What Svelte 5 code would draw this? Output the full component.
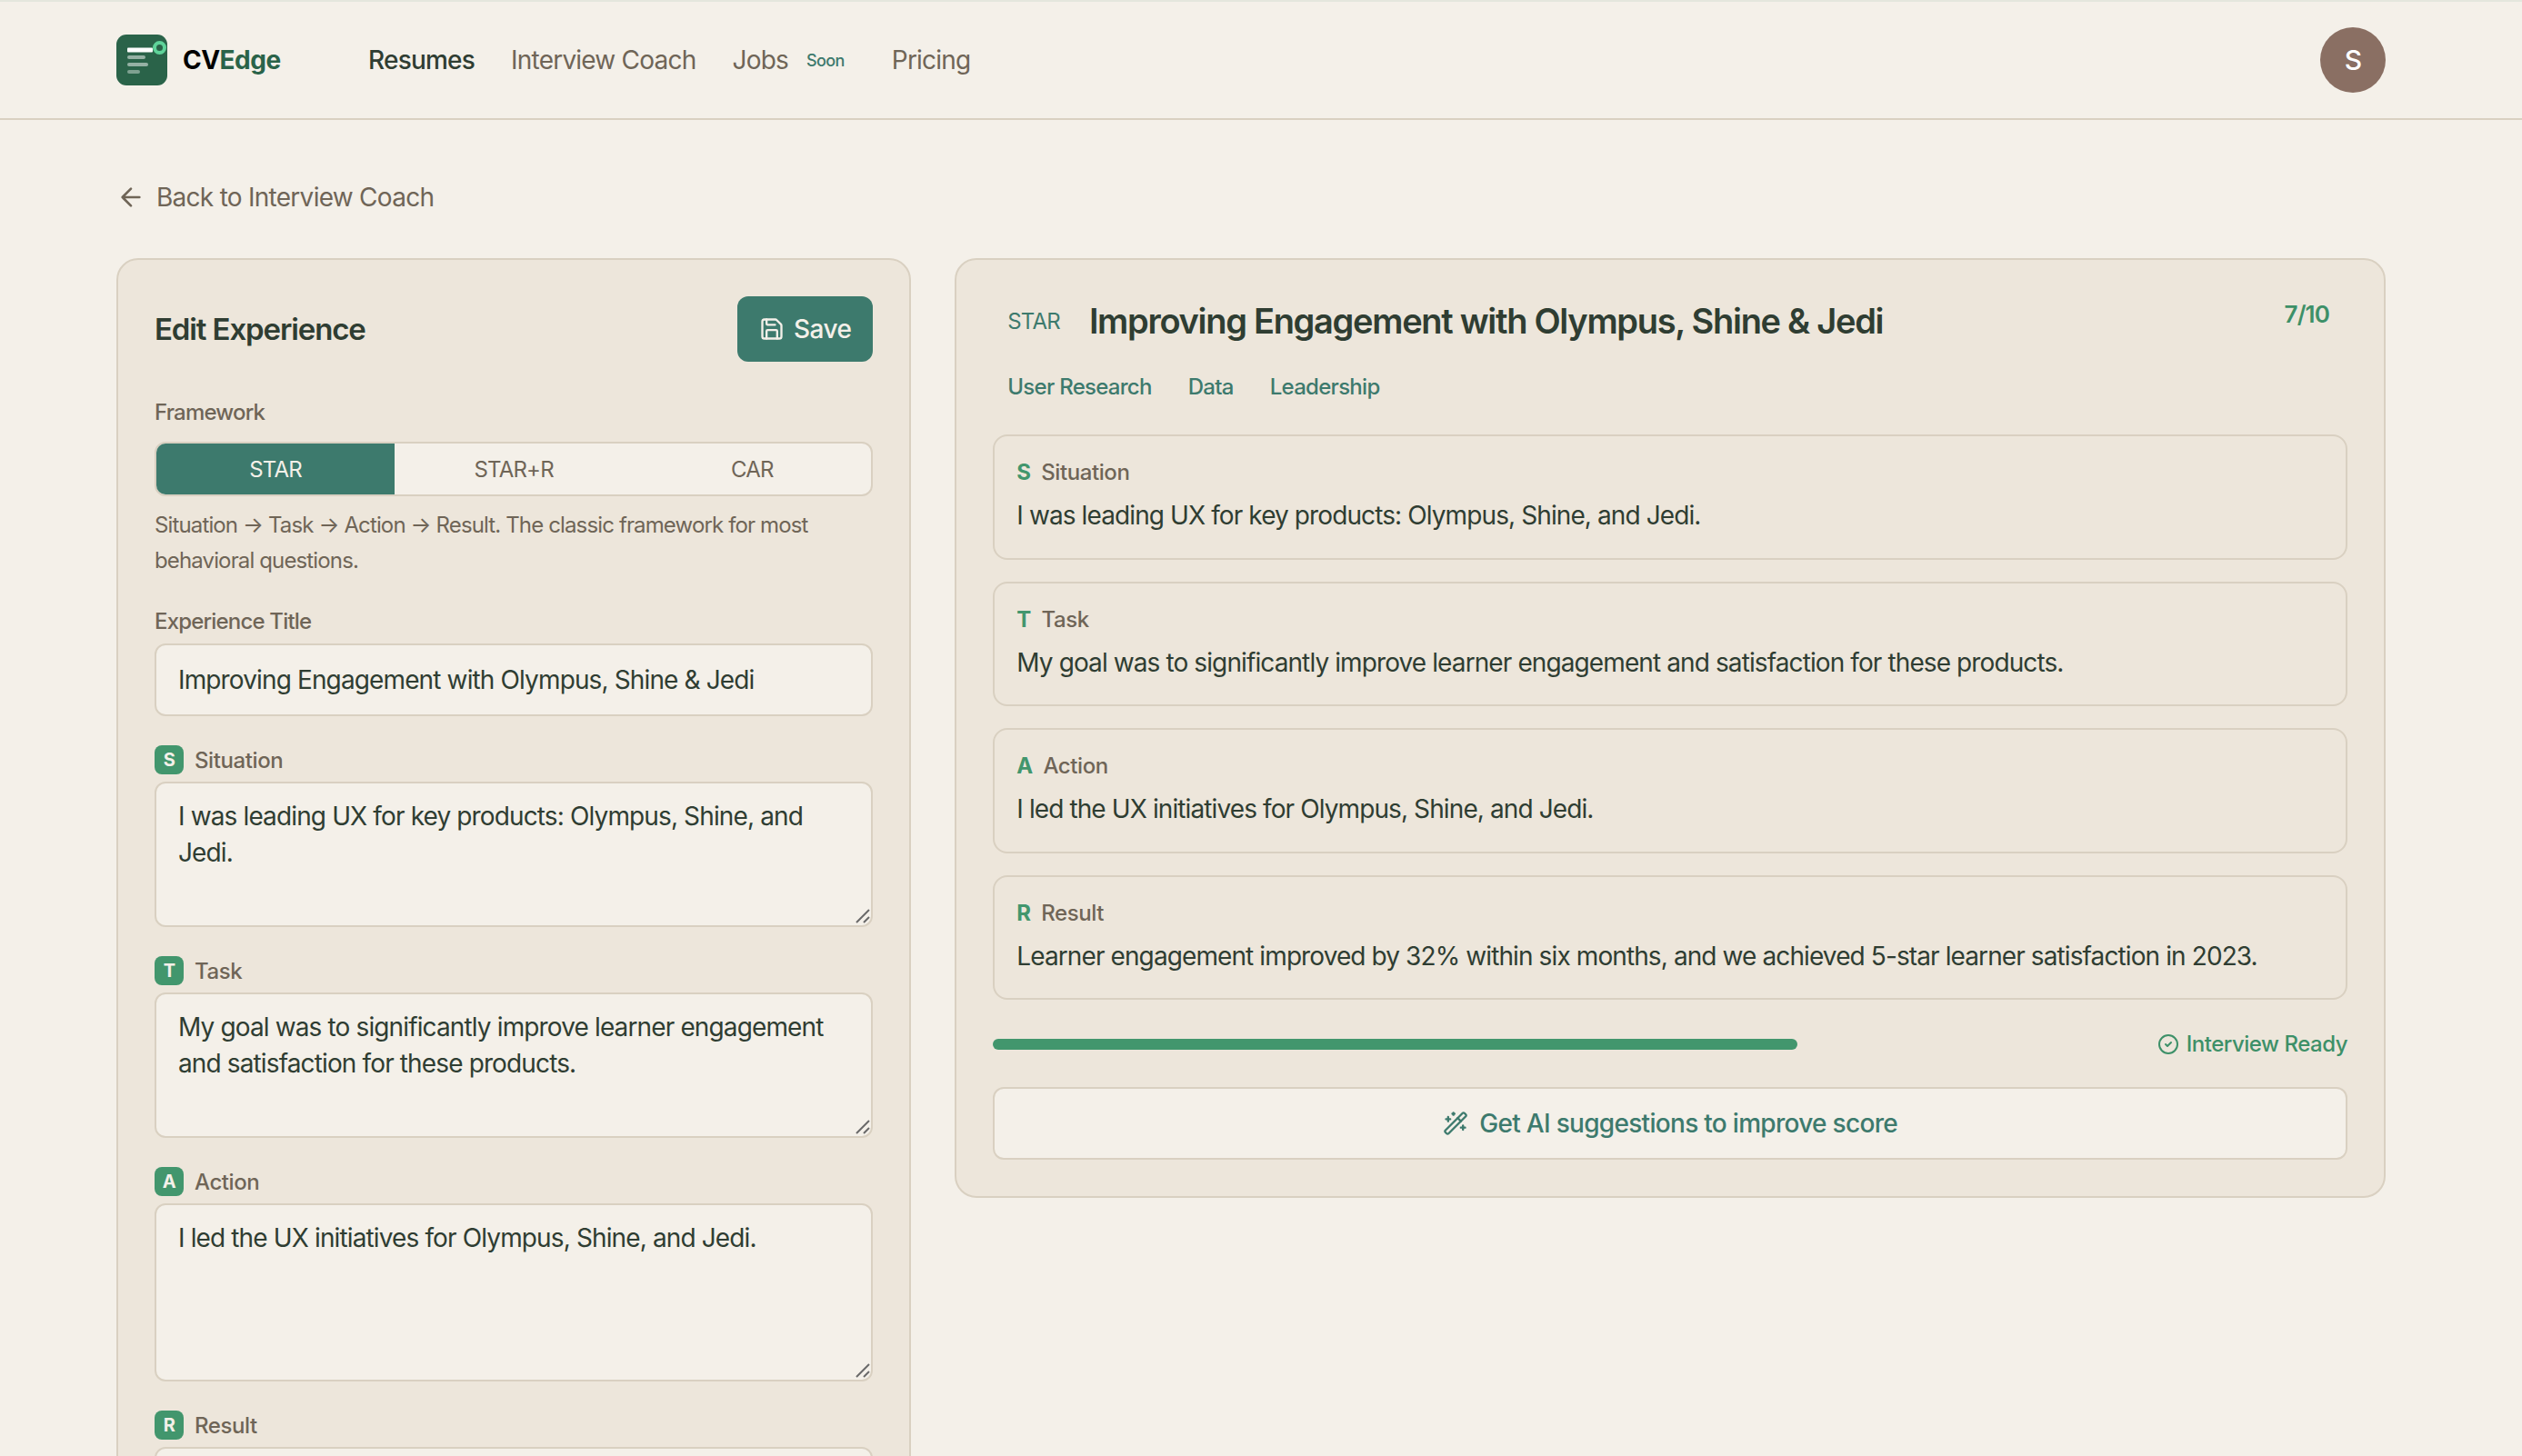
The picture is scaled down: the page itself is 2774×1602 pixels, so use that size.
<script lang="ts">
	const sections = [
		{ key: 'S', label: 'Situation', text: 'I was leading UX for key products: Olympus, Shine, and Jedi.', rows: 'short' },
		{ key: 'T', label: 'Task', text: 'My goal was to significantly improve learner engagement and satisfaction for these products.', rows: 'short' },
		{ key: 'A', label: 'Action', text: 'I led the UX initiatives for Olympus, Shine, and Jedi.', rows: 'tall' },
		{ key: 'R', label: 'Result', text: 'Learner engagement improved by 32% within six months, and we achieved 5-star learner satisfaction in 2023.', rows: 'tall' }
	];

	const frameworks = ['STAR', 'STAR+R', 'CAR'];
	const tags = ['User Research', 'Data', 'Leadership'];
</script>

<div class="page">
	<header class="topbar">
		<div class="brand">
			<svg class="logo" viewBox="0 0 56 56">
				<rect width="56" height="56" rx="11" fill="#2a6349" />
				<rect x="12" y="14.500" width="28" height="5" rx="1" fill="#fff" />
				<rect x="12" y="23" width="20" height="4" rx="2" fill="#fff" opacity="0.5" />
				<rect x="12" y="31" width="23" height="4" rx="2" fill="#fff" opacity="0.5" />
				<rect x="12" y="39" width="14" height="4" rx="2" fill="#fff" opacity="0.4" />
				<circle cx="47.500" cy="14.500" r="5.500" fill="none" stroke="#5fd39a" stroke-width="4" />
			</svg>
			<span class="wordmark">CV<span>Edge</span></span>
		</div>
		<nav>
			<a class="active" href="#resumes">Resumes</a>
			<a href="#coach">Interview Coach</a>
			<a href="#jobs">Jobs<small>Soon</small></a>
			<a href="#pricing">Pricing</a>
		</nav>
		<div class="avatar">S</div>
	</header>

	<main>
		<a class="back" href="#coach">
			<svg viewBox="0 0 24 24"><path d="m12 19-7-7 7-7M19 12H5" /></svg>
			Back to Interview Coach
		</a>

		<div class="columns">
			<section class="card editor">
				<div class="editor-head">
					<h2>Edit Experience</h2>
					<button class="save">
						<svg viewBox="0 0 24 24"><path d="M15.200 3a2 2 0 0 1 1.400.6l3.800 3.800a2 2 0 0 1 .6 1.400V19a2 2 0 0 1-2 2H5a2 2 0 0 1-2-2V5a2 2 0 0 1 2-2z" /><path d="M17 21v-7a1 1 0 0 0-1-1H8a1 1 0 0 0-1 1v7M7 3v4a1 1 0 0 0 1 1h7" /></svg>
						Save
					</button>
				</div>

				<div class="label">Framework</div>
				<div class="segments">
					{#each frameworks as name, i}
						<button class:on={i === 0}>{name}</button>
					{/each}
				</div>
				<p class="hint">Situation → Task → Action → Result. The classic framework for most behavioral questions.</p>

				<label class="label title-label" for="title">Experience Title</label>
				<input id="title" value="Improving Engagement with Olympus, Shine &amp; Jedi" />

				{#each sections as s}
					<div class="field-head">
						<span class="badge">{s.key}</span>
						<span>{s.label}</span>
					</div>
					<div class="area">
						<textarea class={s.rows} value={s.key === 'R' ? '' : s.text}></textarea>
						<svg class="grip" viewBox="0 0 16 16"><path d="M1 15 15 1M9 15l6-6" /></svg>
					</div>
				{/each}
			</section>

			<section class="card preview">
				<div class="title-row">
					<span class="fw">STAR</span>
					<h1>Improving Engagement with Olympus, Shine &amp; Jedi</h1>
					<span class="score">7/10</span>
				</div>
				<div class="tags">
					{#each tags as tag}
						<span>{tag}</span>
					{/each}
				</div>

				<div class="blocks">
					{#each sections as s}
						<div class="block">
							<div class="block-head"><b>{s.key}</b><span>{s.label}</span></div>
							<p>{s.text}</p>
						</div>
					{/each}
				</div>

				<div class="progress">
					<div class="track"><div class="fill" style="width: {7 * 10}%"></div></div>
					<span class="ready">
						<svg viewBox="0 0 24 24"><circle cx="12" cy="12" r="10" /><path d="m9 12 2 2 4-4" /></svg>
						Interview Ready
					</span>
				</div>

				<button class="suggest">
					<svg viewBox="0 0 24 24"><path d="m21.640 3.640-1.280-1.280a1.210 1.210 0 0 0-1.720 0L2.360 18.640a1.210 1.210 0 0 0 0 1.720l1.280 1.280a1.200 1.200 0 0 0 1.720 0L21.640 5.360a1.200 1.200 0 0 0 0-1.720" /><path d="m14 7 3 3M5 6v4M19 14v4M10 2v2M7 8H3M21 16h-4M11 3H9" /></svg>
					Get AI suggestions to improve score
				</button>
			</section>
		</div>
	</main>
</div>

<style>
	:global(body) {
		margin: 0;
		background: #f4f0e9;
	}

	.page {
		height: 1602px;
		overflow: hidden;
		box-sizing: border-box;
		border-top: 2px solid #e4e6dd;
		background: #f4f0e9;
		color: #2f3d32;
		font-family: Inter, "Noto Sans", sans-serif;
	}

	/* Inter runs wide here, tighten it everywhere */
	.page :global(*) {
		letter-spacing: -0.034em;
	}

	button,
	input,
	textarea {
		font-family: inherit;
	}

	.topbar {
		display: flex;
		align-items: center;
		box-sizing: border-box;
		height: 130px;
		padding: 0 150px 0 128px;
		border-bottom: 2px solid #d9d0c1;
	}

	.brand {
		display: flex;
		align-items: center;
		flex: none;
		gap: 17px;
		width: 277px;
	}

	.logo {
		width: 56px;
		height: 56px;
	}

	.page .wordmark,
	.page .wordmark span {
		letter-spacing: -0.018em;
	}

	.wordmark {
		font-size: 28px;
		font-weight: 700;
		color: #000;
	}

	.wordmark span {
		color: #2a6349;
	}

	nav {
		display: flex;
		align-items: center;
		gap: 40px;
		flex: 1;
	}

	.page nav a {
		display: flex;
		align-items: center;
		font-size: 28px;
		letter-spacing: -0.028em;
		color: #6f6557;
		text-decoration: none;
	}

	.page nav a.active {
		color: #2f3d32;
		font-weight: 500;
	}

	nav small {
		margin: 0 12px 0 20px;
		font-size: 18px;
		font-weight: 500;
		color: #3d7a6d;
	}

	.avatar {
		display: flex;
		align-items: center;
		justify-content: center;
		width: 72px;
		height: 72px;
		border-radius: 50%;
		background: #8a6f63;
		color: #fff;
		font-size: 30px;
		font-weight: 500;
	}

	main {
		padding: 64px 150px 0 128px;
	}

	.page .back {
		display: flex;
		align-items: center;
		gap: 12px;
		height: 42px;
		font-size: 28px;
		letter-spacing: -0.026em;
		color: #6f6557;
		text-decoration: none;
	}

	.back svg {
		width: 32px;
		height: 32px;
		fill: none;
		stroke: currentColor;
		stroke-width: 2;
		stroke-linecap: round;
		stroke-linejoin: round;
	}

	.columns {
		display: grid;
		grid-template-columns: 5fr 9fr;
		gap: 48px;
		align-items: start;
		margin-top: 46px;
	}

	.card {
		box-sizing: border-box;
		padding: 40px;
		border: 2px solid #d9d0c1;
		border-radius: 24px;
		background: #ede6db;
	}

	.editor-head {
		display: flex;
		align-items: center;
		justify-content: space-between;
		margin-bottom: 40px;
	}

	h2 {
		margin: 0;
		font-size: 33px;
		font-weight: 600;
	}

	.page .save {
		display: flex;
		align-items: center;
		gap: 10px;
		height: 72px;
		padding: 0 24px;
		border: none;
		border-radius: 12px;
		background: #3d7a6d;
		color: #f4f0e9;
		font-size: 28px;
		font-weight: 500;
		letter-spacing: -0.02em;
	}

	.save svg {
		width: 28px;
		height: 28px;
		fill: none;
		stroke: currentColor;
		stroke-width: 2;
		stroke-linecap: round;
		stroke-linejoin: round;
	}

	.label {
		display: block;
		font-size: 24px;
		font-weight: 500;
		line-height: 32px;
		color: #6f6557;
	}

	.segments {
		display: grid;
		grid-template-columns: repeat(3, 1fr);
		margin-top: 16px;
		border: 2px solid #d9d0c1;
		border-radius: 12px;
		background: #f4f0e9;
		overflow: hidden;
	}

	.segments button {
		height: 56px;
		border: none;
		background: none;
		color: #6f6557;
		font-size: 24px;
	}

	.segments button.on {
		background: #3d7a6d;
		color: #f4f0e9;
	}

	.page .hint {
		margin: 12px 0 0;
		font-size: 24px;
		letter-spacing: -0.036em;
		line-height: 39px;
		color: #6f6557;
	}

	.title-label {
		margin-top: 32px;
		margin-bottom: 8px;
	}

	.page input,
	.page textarea {
		display: block;
		box-sizing: border-box;
		width: 100%;
		border: 2px solid #d9d0c1;
		border-radius: 12px;
		background: #f4f0e9;
		color: #2f3d32;
		font-size: 28px;
		letter-spacing: -0.031em;
		line-height: 40px;
		outline: none;
	}

	input {
		height: 80px;
		padding: 0 24px;
	}

	textarea {
		height: 160px;
		padding: 16px 24px;
		resize: none;
	}

	textarea.tall {
		height: 196px;
	}

	.area {
		position: relative;
	}

	.grip {
		position: absolute;
		right: 3px;
		bottom: 4px;
		width: 16px;
		height: 16px;
		fill: none;
		stroke: #6a6a6a;
		stroke-width: 2;
	}

	.field-head {
		display: flex;
		align-items: center;
		gap: 12px;
		margin: 32px 0 8px;
		font-size: 24px;
		font-weight: 500;
		color: #6f6557;
	}

	.page .field-head span:last-child,
	.page .block-head span {
		letter-spacing: -0.017em;
	}

	.badge {
		display: flex;
		align-items: center;
		justify-content: center;
		width: 32px;
		height: 32px;
		border-radius: 8px;
		background: #42966d;
		color: #f4f0e9;
		font-size: 20px;
		font-weight: 700;
	}

	.title-row {
		position: relative;
		display: flex;
		align-items: center;
		gap: 32px;
		padding: 0 16px;
		height: 54px;
	}

	.fw {
		font-size: 24px;
		color: #3d7a6d;
	}

	h1 {
		margin: 0;
		font-size: 38px;
		font-weight: 600;
	}

	.score {
		position: absolute;
		top: 4px;
		right: 20px;
		font-size: 26px;
		font-weight: 600;
		color: #3d9068;
	}

	.tags {
		display: flex;
		gap: 40px;
		margin-top: 30px;
		padding: 0 16px;
		font-size: 24px;
		font-weight: 500;
		line-height: 32px;
		color: #3d7a6d;
	}

	.page .tags span {
		letter-spacing: -0.03em;
	}

	.blocks {
		display: flex;
		flex-direction: column;
		gap: 24px;
		margin-top: 36px;
	}

	.block {
		box-sizing: border-box;
		height: 137.500px;
		padding: 24px;
		border: 2px solid #d9d0c1;
		border-radius: 16px;
	}

	.block-head {
		display: flex;
		align-items: center;
		gap: 12px;
		font-size: 24px;
		font-weight: 500;
		line-height: 32px;
		color: #6f6557;
	}

	.block-head b {
		color: #42966d;
		font-weight: 700;
	}

	.page .block p {
		margin: 11px 0 0;
		font-size: 28px;
		letter-spacing: -0.032em;
		line-height: 40px;
	}

	.progress {
		display: flex;
		align-items: center;
		gap: 16px;
		margin-top: 34px;
	}

	.track {
		flex: 1;
	}

	.fill {
		height: 12px;
		border-radius: 6px;
		background: #42966d;
	}

	.page .ready {
		display: flex;
		align-items: center;
		gap: 8px;
		font-size: 24px;
		font-weight: 500;
		letter-spacing: -0.02em;
		line-height: 29px;
		color: #3d9068;
	}

	.ready svg {
		width: 24px;
		height: 24px;
		fill: none;
		stroke: currentColor;
		stroke-width: 2;
		stroke-linecap: round;
		stroke-linejoin: round;
	}

	.page .suggest {
		display: flex;
		align-items: center;
		justify-content: center;
		gap: 12px;
		box-sizing: border-box;
		width: 100%;
		height: 80px;
		margin-top: 33px;
		border: 2px solid #d9d0c1;
		border-radius: 12px;
		background: #f4f0e9;
		color: #3d7a6d;
		font-size: 28px;
		font-weight: 500;
		letter-spacing: -0.025em;
	}

	.suggest svg {
		width: 28px;
		height: 28px;
		fill: none;
		stroke: currentColor;
		stroke-width: 2;
		stroke-linecap: round;
		stroke-linejoin: round;
	}
</style>
